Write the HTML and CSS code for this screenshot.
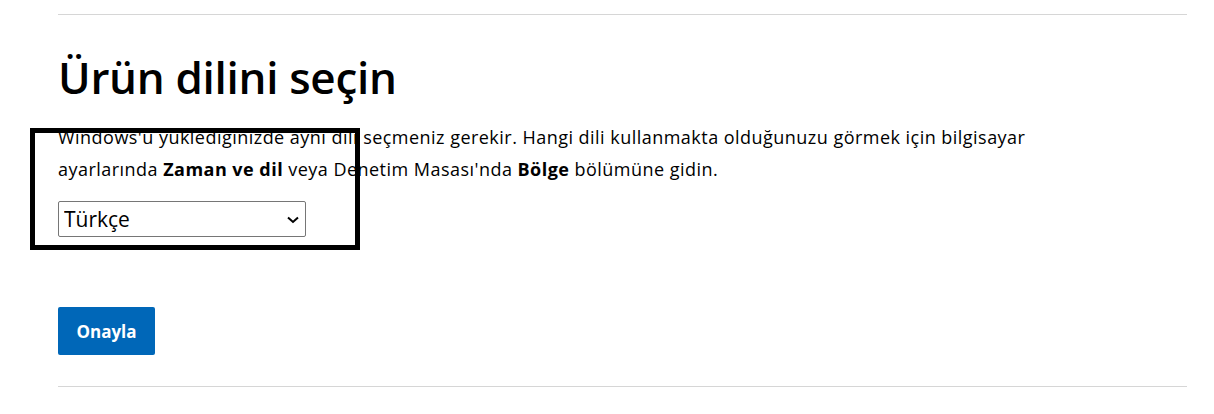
FILE: index.html
```html
<!DOCTYPE html>
<html lang="tr">
<head>
    <meta charset="UTF-8">
    <meta name="viewport" content="width=device-width, initial-scale=1.0">
    <title>Ürün dilini seçin</title>
    <link rel="stylesheet" href="styles.css">
</head>
<body>
    <div class="container">
        <hr class="divider">
        <h1>Ürün dilini seçin</h1>
        <div class="lang-block">
            <p class="info">Windows'u yüklediğinizde aynı dili seçmeniz gerekir. Hangi dili kullanmakta olduğunuzu görmek için bilgisayar ayarlarında <strong>Zaman ve dil</strong> veya Denetim Masası'nda <strong>Bölge</strong> bölümüne gidin.</p>
            <div class="select-wrap">
                <select id="productLanguage">
                    <option value="tr" selected>Türkçe</option>
                    <option value="en">English</option>
                    <option value="de">Deutsch</option>
                </select>
                <svg class="chevron" width="12" height="8" viewBox="0 0 12 8"><path d="M1 1.5 L6 6 L11 1.5" fill="none" stroke="#000" stroke-width="2"/></svg>
            </div>
            <div class="highlight"></div>
        </div>
        <button class="confirm">Onayla</button>
        <hr class="divider bottom">
    </div>
</body>
</html>
```
FILE: styles.css
```css
body { margin: 0; font-family: "Open Sans", "Noto Sans", sans-serif; color: #000; background: #fff; }
.container { margin: 0 27px 0 58px; padding-top: 14px; }
.divider { border: 0; border-top: 1px solid #d6d6d6; margin: 0; }
h1 { font-size: 44px; font-weight: 600; line-height: 48px; margin: 38px 0 0; letter-spacing: -0.3px; }
.lang-block { position: relative; margin-top: 20px; }
.info { font-size: 18px; line-height: 32px; margin: 0; max-width: 1010px; letter-spacing: 0.47px; }
.select-wrap { position: relative; width: 248px; margin-top: 16px; }
select { appearance: none; -webkit-appearance: none; width: 248px; height: 36px; padding: 0 30px 0 5px; font-family: inherit; font-size: 21px; border: 1px solid #767676; border-radius: 2px; background: #fff; color: #000; }
.chevron { position: absolute; right: 7px; top: 15px; pointer-events: none; }
.highlight { position: absolute; left: -28px; top: 7px; width: 320px; height: 112px; border: 5px solid #000; }
.confirm { margin-top: 70px; width: 97px; height: 48px; background: #0067b8; color: #fff; border: 0; border-radius: 2px; font-family: inherit; font-size: 17px; font-weight: 700; }
.bottom { margin-top: 31px; }
```
